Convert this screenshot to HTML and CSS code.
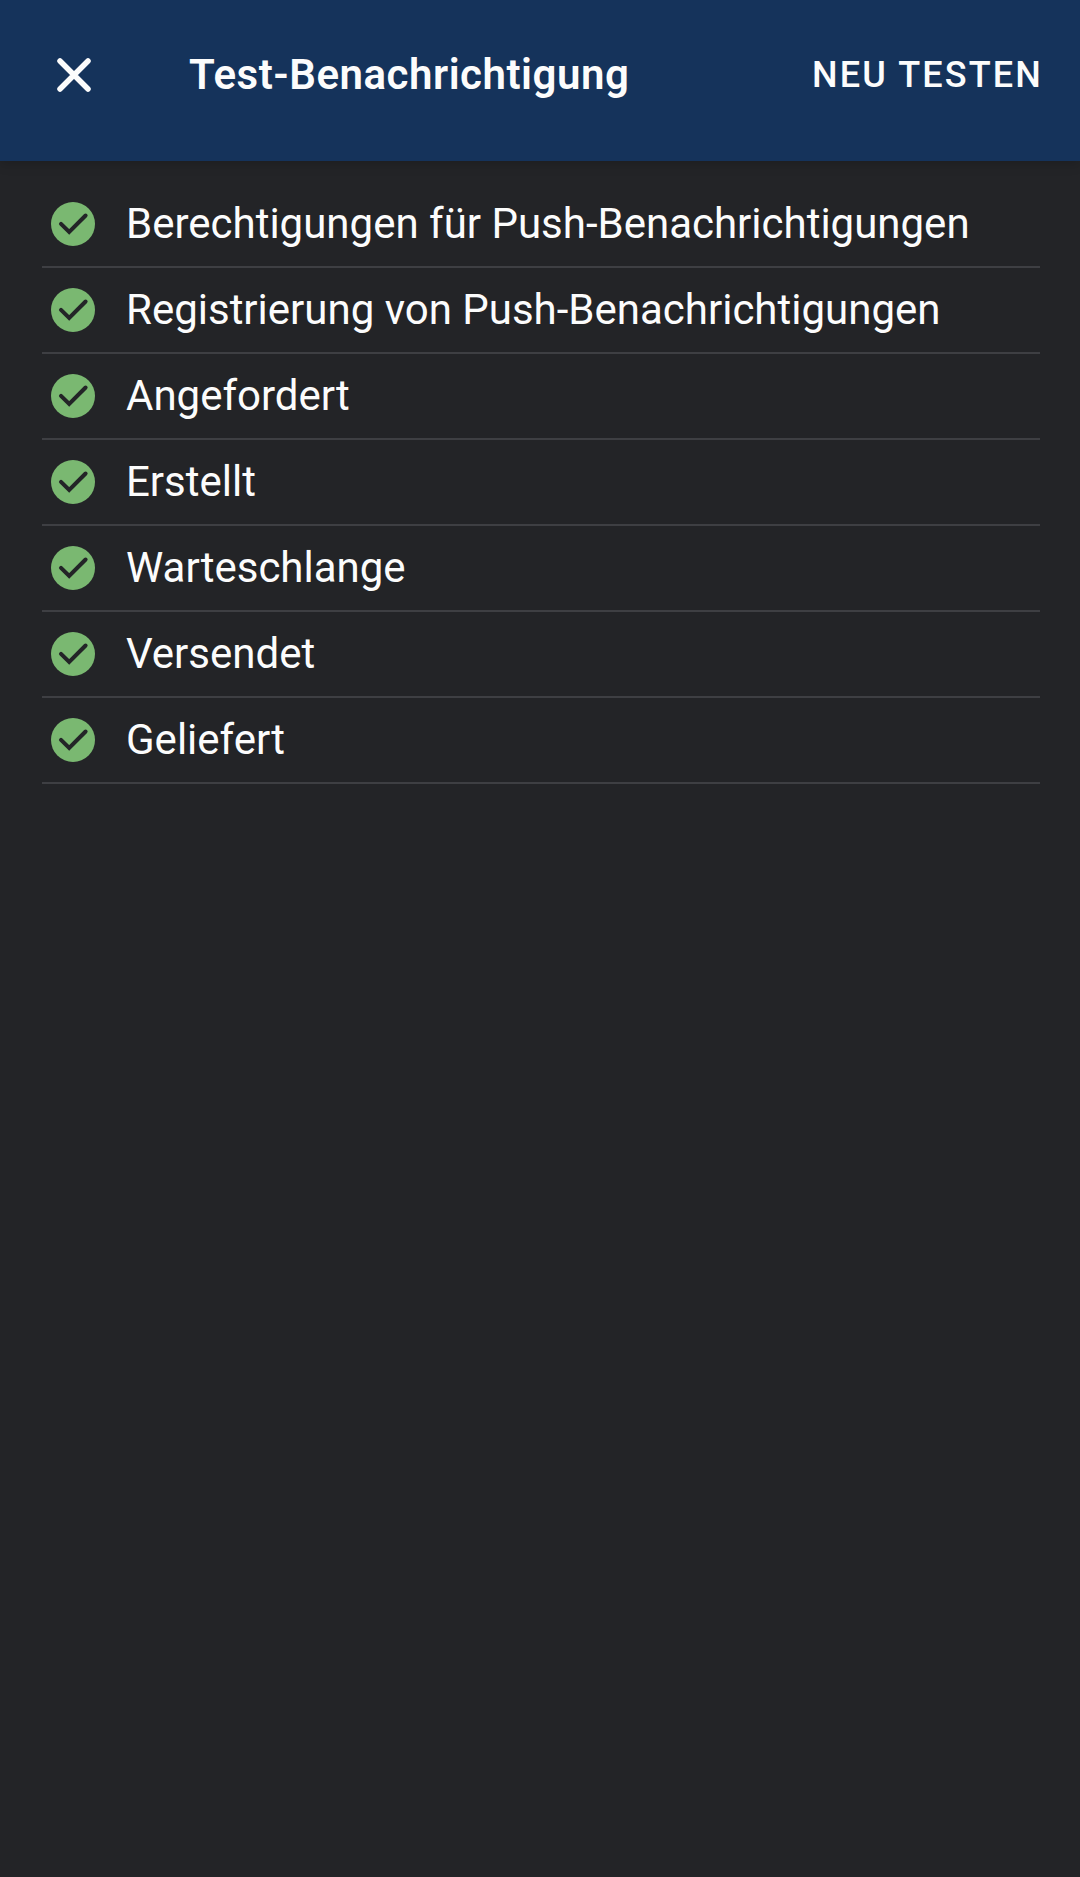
FILE: index.html
```html
<!DOCTYPE html>
<html lang="de">
<head>
<meta charset="utf-8">
<meta name="viewport" content="width=device-width, initial-scale=1">
<title>Test-Benachrichtigung</title>
<link rel="stylesheet" href="styles.css">
</head>
<body>
<svg class="symbols" aria-hidden="true">
  <symbol id="check" viewBox="0 0 44 44">
    <circle class="check-disc" cx="22" cy="22" r="22"/>
    <path class="check-mark" d="M10 21.8l8.2 8.2L34.6 13.5"/>
  </symbol>
</svg>
<header class="app-bar">
  <button class="close" type="button" aria-label="Schließen">
    <svg class="close-icon" viewBox="0 0 36 36" aria-hidden="true"><path d="M4 4l28 28M32 4L4 32"/></svg>
  </button>
  <h1 class="title">Test-Benachrichtigung</h1>
  <button class="action" type="button">NEU TESTEN</button>
</header>
<main class="content">
  <ul class="steps">
    <li class="step"><svg class="step-icon" aria-hidden="true"><use href="#check"/></svg><span>Berechtigungen für Push-Benachrichtigungen</span></li>
    <li class="step"><svg class="step-icon" aria-hidden="true"><use href="#check"/></svg><span>Registrierung von Push-Benachrichtigungen</span></li>
    <li class="step"><svg class="step-icon" aria-hidden="true"><use href="#check"/></svg><span>Angefordert</span></li>
    <li class="step"><svg class="step-icon" aria-hidden="true"><use href="#check"/></svg><span>Erstellt</span></li>
    <li class="step"><svg class="step-icon" aria-hidden="true"><use href="#check"/></svg><span>Warteschlange</span></li>
    <li class="step"><svg class="step-icon" aria-hidden="true"><use href="#check"/></svg><span>Versendet</span></li>
    <li class="step"><svg class="step-icon" aria-hidden="true"><use href="#check"/></svg><span>Geliefert</span></li>
  </ul>
</main>
</body>
</html>
```
FILE: styles.css
```css
* { box-sizing: border-box; }
body {
  margin: 0;
  min-height: 100vh;
  background: #232427;
  color: #fcfcfc;
  font-family: Roboto, sans-serif;
}
.symbols { display: none; }
.app-bar {
  display: flex;
  align-items: center;
  min-height: 161px;
  padding: 0 37px 12px 48px;
  background: #15335b;
  box-shadow: 0 2px 12px rgba(0, 0, 0, 0.2);
}
button {
  padding: 0;
  border: 0;
  background: none;
  color: inherit;
  font: inherit;
}
.close { display: flex; padding: 8px; }
.close-icon {
  width: 36px;
  height: 36px;
  fill: none;
  stroke: #fcfcfc;
  stroke-width: 5.5;
  stroke-linecap: round;
}
.title {
  flex: 1;
  margin: 0 0 0 89px;
  font-size: 42px;
  font-weight: 600;
  line-height: 50px;
  letter-spacing: 0.0125em;
}
.action {
  font-size: 36px;
  font-weight: 500;
  line-height: 52px;
  letter-spacing: 0.06em;
}
.content { padding: 21px 40px 40px 42px; }
.steps { margin: 0; padding: 0; list-style: none; }
.step {
  display: flex;
  align-items: center;
  gap: 31px;
  min-height: 86px;
  padding-left: 9px;
  border-bottom: 2px solid #3e3f43;
  font-size: 42px;
  line-height: 52px;
}
.step-icon { flex: none; width: 44px; height: 44px; }
.check-disc { fill: #7ab871; }
.check-mark {
  fill: none;
  stroke: #232427;
  stroke-width: 4;
  stroke-linecap: round;
}
```
